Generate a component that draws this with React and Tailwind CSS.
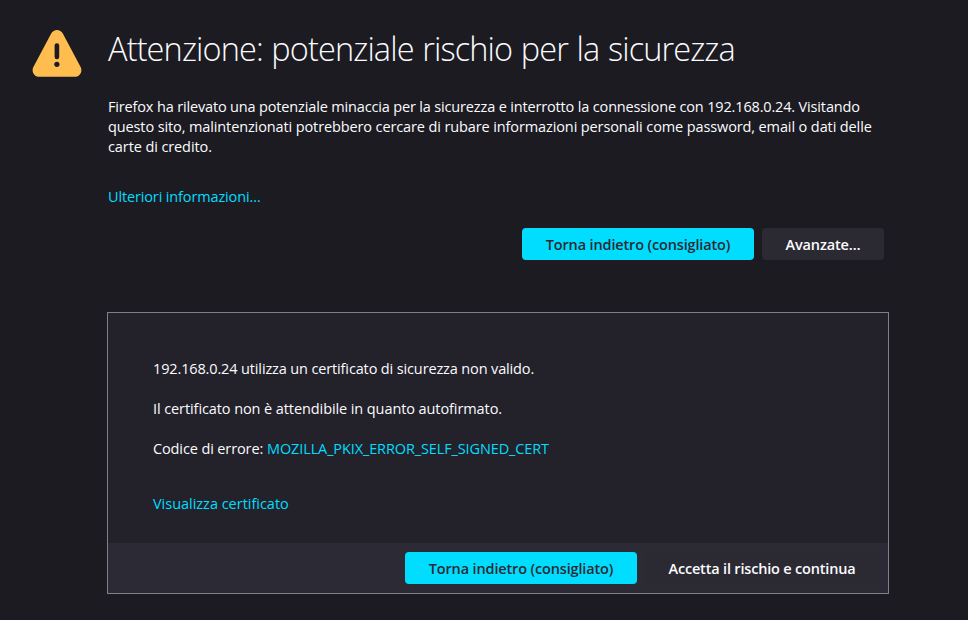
function PrimaryButton() {
  return (
    <button className="flex h-8 w-[232px] items-center justify-center rounded-[4px] bg-[#00ddff] pt-0.5 font-semibold text-[#2b2a33]">
      <span className="tracking-[-0.15px] whitespace-nowrap">Torna indietro (consigliato)</span>
    </button>
  );
}

function WarningIcon() {
  return (
    <svg className="mt-[30px] block h-[47px] w-[50px] shrink-0" viewBox="0 0 50 47">
      <path
        fill="#ffbd4f"
        d="M19.2 3.6C21.7-1.1 28.3-1.1 30.8 3.6L48.6 37C50.9 41.5 47.9 46.8 42.9 46.8H7.1C2.1 46.8-.9 41.5 1.4 37Z"
      />
      <rect x="22.6" y="13.2" width="4.6" height="16" rx="2.2" fill="#1c1b22" />
      <circle cx="24.9" cy="34.3" r="2.6" fill="#1c1b22" />
    </svg>
  );
}

export default function App() {
  return (
    <div className="flex h-[620px] w-[968px] flex-col overflow-hidden bg-[#1c1b22] font-['Open_Sans','Noto_Sans',sans-serif] text-[14.5px] leading-5 text-[#fbfbfe]">
      <div className="flex h-[312px] pl-8">
        <WarningIcon />
        <main className="ml-[26px] w-[776px]">
          <h1 className="mt-[29px] h-10 text-[32.5px] leading-10 font-light tracking-[-0.88px] [word-spacing:1px] whitespace-nowrap">
            Attenzione: potenziale rischio per la sicurezza
          </h1>
          <p className="mt-[28px] whitespace-nowrap">
            <span className="block tracking-[-0.157px]">Firefox ha rilevato una potenziale minaccia per la sicurezza e interrotto la connessione con 192.168.0.24. Visitando</span>
            <span className="block tracking-[-0.115px]">questo sito, malintenzionati potrebbero cercare di rubare informazioni personali come password, email o dati delle</span>
            <span className="block tracking-[-0.1px]">carte di credito.</span>
          </p>
          <p className="mt-[30px] tracking-[-0.14px] whitespace-nowrap text-[#00ddff]">
            <a>Ulteriori informazioni…</a>
          </p>
          <div className="mt-[21px] flex justify-end gap-2">
            <PrimaryButton />
            <button className="flex h-8 w-[122px] items-center justify-center rounded-[4px] bg-[#2b2a33] pt-0.5 font-semibold">
              <span className="tracking-[-0.15px]">Avanzate…</span>
            </button>
          </div>
        </main>
      </div>
      <section className="ml-[107px] flex h-[282px] w-[782px] flex-col border border-[#80808b] bg-[#23222b]">
        <div className="flex h-[230px] flex-col items-start pt-[46px] pl-[45px] whitespace-nowrap">
          <p className="tracking-[-0.135px]">192.168.0.24 utilizza un certificato di sicurezza non valido.</p>
          <p className="mt-5 tracking-[-0.09px]">Il certificato non è attendibile in quanto autofirmato.</p>
          <p className="mt-5 flex tracking-[-0.12px]">
            <span className="w-[114px]">Codice di errore:</span>
            <a className="text-[#00ddff]">MOZILLA_PKIX_ERROR_SELF_SIGNED_CERT</a>
          </p>
          <a className="mt-[35px] tracking-[-0.02px] text-[#00ddff]">Visualizza certificato</a>
        </div>
        <div className="flex h-[50px] items-center justify-end gap-2 bg-[#2c2b35] pr-[9px]">
          <PrimaryButton />
          <button className="flex h-8 w-[234px] items-center justify-center rounded-[4px] bg-[#2b2a33] pt-0.5 font-semibold">
            <span className="tracking-[-0.18px] whitespace-nowrap">Accetta il rischio e continua</span>
          </button>
        </div>
      </section>
    </div>
  );
}
